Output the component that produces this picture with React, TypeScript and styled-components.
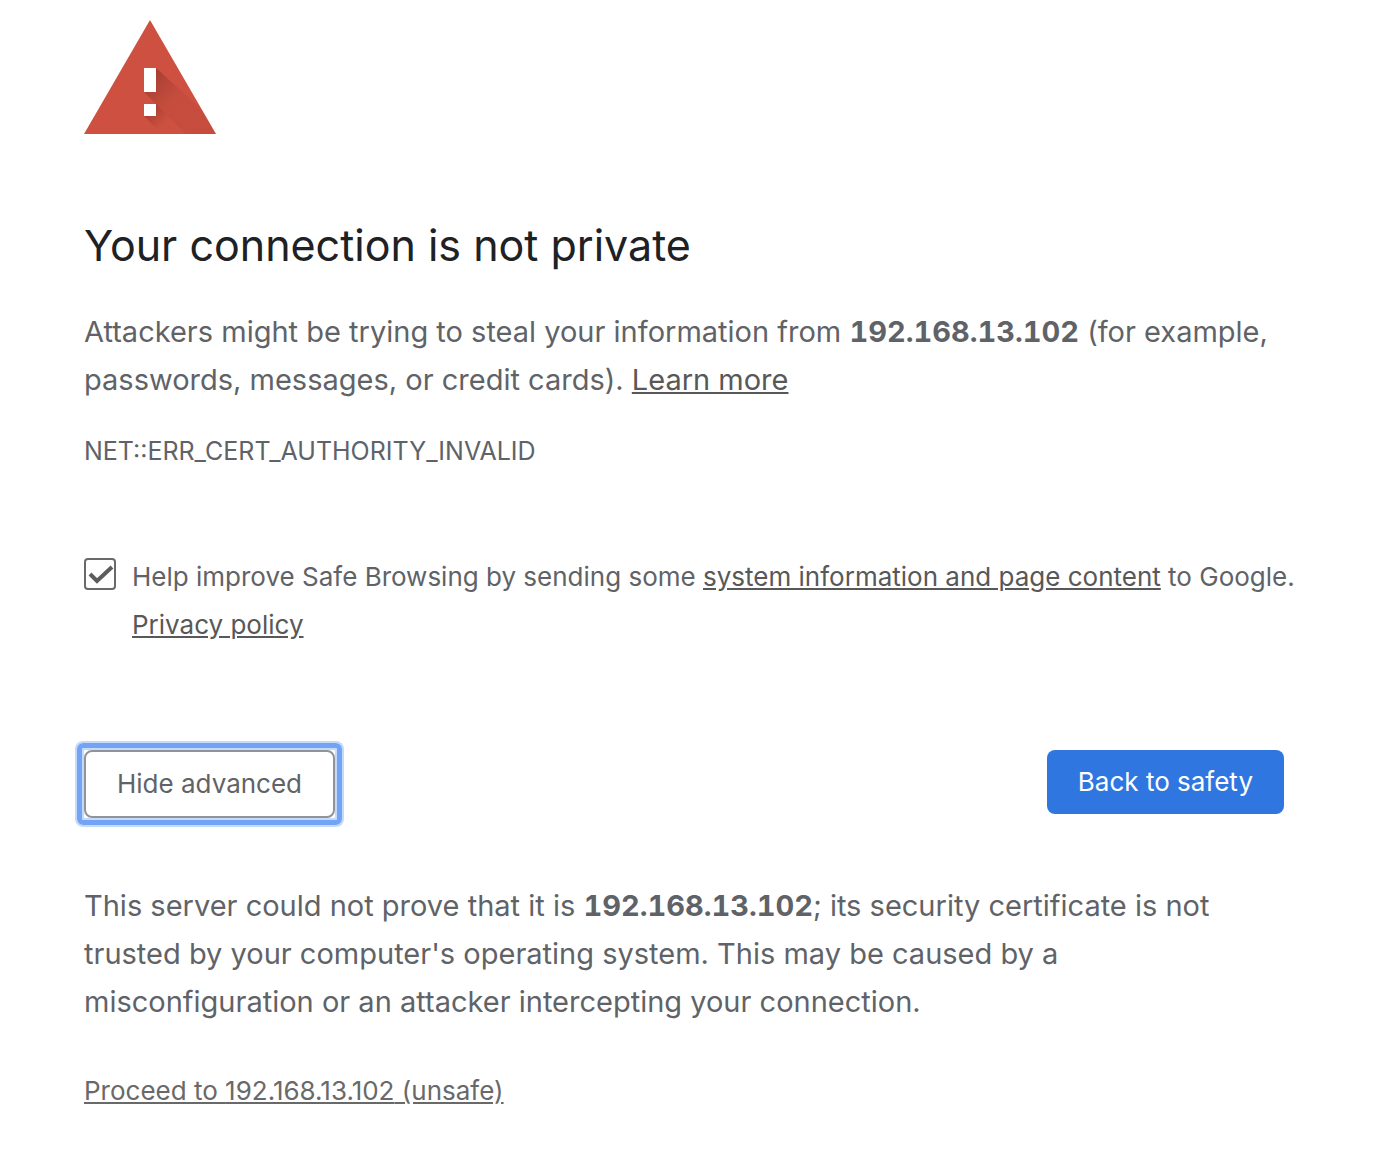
import React, { useState } from "react";
import styled, { createGlobalStyle } from "styled-components";

const GlobalStyle = createGlobalStyle`
  *, *::before, *::after { box-sizing: border-box; }
  body {
    margin: 0;
    background: #fff;
    color: #5f6368;
    font-family: Inter, "Liberation Sans", sans-serif;
  }
`;

const Page = styled.main`
  max-width: 1408px;
  margin: 0 auto;
  padding: 20px 104px 40px 84px;
`;

const WarningIcon = styled.svg`
  display: block;
  width: 132px;
  height: 114px;
`;

const Title = styled.h1`
  margin: 82px 0 0;
  color: #202124;
  font-size: 43px;
  font-weight: 400;
  line-height: 58px;
`;

const Paragraph = styled.p`
  margin: 0;
  font-size: 29px;
  line-height: 48px;
`;

const Host = styled.strong`
  font-weight: 700;
  font-variant-numeric: tabular-nums;
`;

const Summary = styled(Paragraph)`
  margin-top: 34px;
`;

const ErrorCode = styled.p`
  margin: 32px 0 0;
  font-size: 25px;
  line-height: 30px;
`;

const TextLink = styled.a<{ $color?: string }>`
  color: ${(p) => p.$color ?? "inherit"};
  text-decoration: underline;
`;

const OptIn = styled.div`
  display: flex;
  gap: 16px;
  margin: 87px -16px 0 0;
  font-size: 26px;
  line-height: 48px;
`;

const CheckFrame = styled.span`
  display: grid;
  flex: none;
  width: 32px;
  height: 32px;
  margin-top: 5px;

  > * { grid-area: 1 / 1; }
`;

const Checkbox = styled.input`
  appearance: none;
  width: 32px;
  height: 32px;
  margin: 0;
  border: 2px solid #696969;
  border-radius: 4px;
  background: #fff;

  &:not(:checked) + svg { visibility: hidden; }
`;

const Tick = styled.svg`
  width: 32px;
  height: 32px;
  pointer-events: none;
`;

const Actions = styled.div`
  display: flex;
  align-items: flex-start;
  justify-content: space-between;
  margin-top: 101px;
`;

const Button = styled.button`
  height: 64px;
  padding: 0 31px;
  border: 0;
  border-radius: 8px;
  background: #2f76e0;
  color: #fff;
  font: 400 26px/32px Inter, "Liberation Sans", sans-serif;
`;

const OutlineButton = styled(Button)`
  position: relative;
  height: 68px;
  border: 2px solid #909498;
  background: #fff;
  color: #5f6368;

  &::after {
    content: "";
    position: absolute;
    inset: -9px;
    border: 5px solid #73a3f5;
    border-radius: 6px;
    box-shadow: 0 0 0 2px #c4dafa, inset 0 0 0 2px #c4dafa;
    pointer-events: none;
  }
`;

const Details = styled.section`
  margin-top: 64px;
`;

const Proceed = styled.p`
  margin: 48px 0 0;
  font-size: 26px;
  line-height: 34px;
`;

export default function App() {
  const [reporting, setReporting] = useState(true);
  const [open, setOpen] = useState(true);
  const host = "192.168.13.102";

  return (
    <>
      <GlobalStyle />
      <Page>
        <WarningIcon viewBox="0 0 132 114" aria-hidden="true">
          <defs>
            <linearGradient id="barShade" gradientUnits="userSpaceOnUse" x1="66" y1="60" x2="88" y2="82">
              <stop offset="0" stopColor="#8f342a" stopOpacity=".6" />
              <stop offset="1" stopColor="#983a2f" stopOpacity=".13" />
            </linearGradient>
            <linearGradient id="dotShade" gradientUnits="userSpaceOnUse" x1="66" y1="90" x2="80" y2="104">
              <stop offset="0" stopColor="#8f342a" stopOpacity=".6" />
              <stop offset="1" stopColor="#983a2f" stopOpacity="0" />
            </linearGradient>
          </defs>
          <path d="M66 0 132 114H0Z" fill="#cd5040" />
          <path d="M72 48 118 90 132 114H102L60 72Z" fill="url(#barShade)" />
          <path d="M72 84 102 114H78L60 96Z" fill="url(#dotShade)" />
          <path d="M60 48h12v24H60zM60 84h12v12H60z" fill="#fff" />
        </WarningIcon>
        <Title>Your connection is not private</Title>
        <Summary>
          Attackers might be trying to steal your information from <Host>{host}</Host> (for
          example, passwords, messages, or credit cards). <TextLink href="#learn" $color="#585858">Learn more</TextLink>
        </Summary>
        <ErrorCode>NET::ERR_CERT_AUTHORITY_INVALID</ErrorCode>
        <OptIn>
          <CheckFrame>
            <Checkbox
              id="reporting"
              type="checkbox"
              checked={reporting}
              onChange={(e) => setReporting(e.target.checked)}
            />
            <Tick viewBox="0 0 32 32" aria-hidden="true">
              <path d="m6 16 7 7L28 9" fill="none" stroke="#5c5c5c" strokeWidth="4" />
            </Tick>
          </CheckFrame>
          <label htmlFor="reporting">
            Help improve Safe Browsing by sending some{" "}
            <TextLink href="#content" $color="#585858">system information and page content</TextLink> to Google.{" "}
            <TextLink href="#privacy" $color="#585858">Privacy policy</TextLink>
          </label>
        </OptIn>
        <Actions>
          <OutlineButton type="button" onClick={() => setOpen(!open)}>
            {open ? "Hide advanced" : "Advanced"}
          </OutlineButton>
          <Button type="button">Back to safety</Button>
        </Actions>
        {open && (
          <Details>
            <Paragraph>
              This server could not prove that it is <Host>{host}</Host>; its security
              certificate is not trusted by your computer's operating system. This may be caused by a
              misconfiguration or an attacker intercepting your connection.
            </Paragraph>
            <Proceed>
              <TextLink href="#proceed" $color="#696969">Proceed to {host} (unsafe)</TextLink>
            </Proceed>
          </Details>
        )}
      </Page>
    </>
  );
}
